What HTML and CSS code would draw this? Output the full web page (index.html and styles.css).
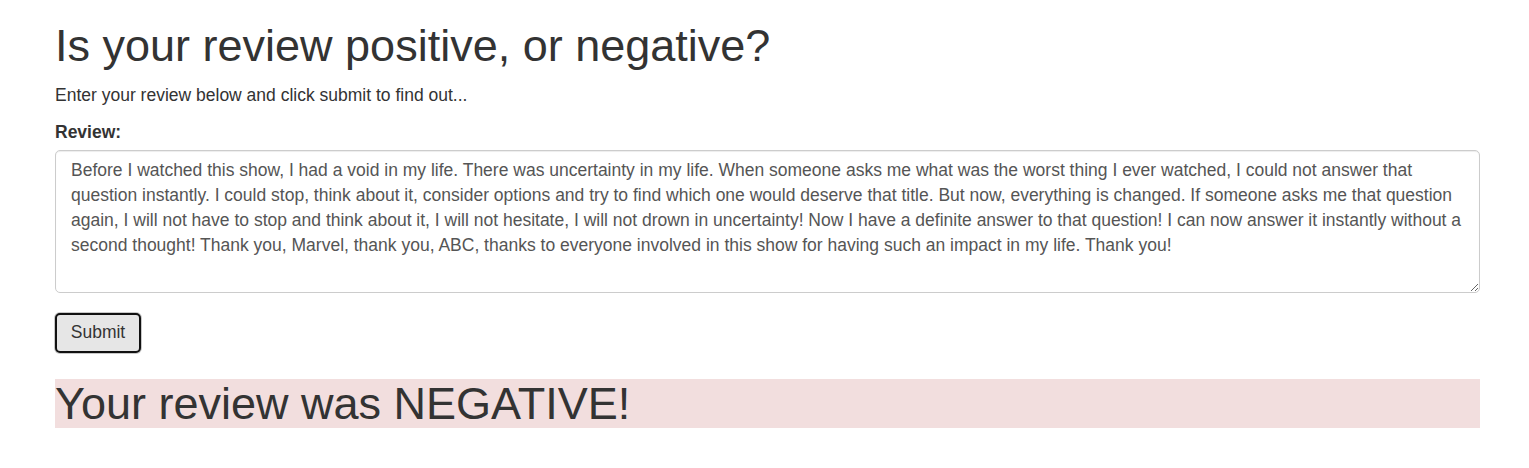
FILE: index.html
```html
<!DOCTYPE html>
<html>
<head>
<meta charset="utf-8">
<link rel="stylesheet" href="styles.css">
</head>
<body>
<div class="container">
  <h1 class="title">Is your review positive, or negative?</h1>
  <p class="lead-text">Enter your review below and click submit to find out...</p>
  <form class="review-form">
    <label class="field-label" for="review">Review:</label>
    <textarea id="review" class="review-box" rows="5">Before I watched this show, I had a void in my life. There was uncertainty in my life. When someone asks me what was the worst thing I ever watched, I could not answer that question instantly. I could stop, think about it, consider options and try to find which one would deserve that title. But now, everything is changed. If someone asks me that question again, I will not have to stop and think about it, I will not hesitate, I will not drown in uncertainty! Now I have a definite answer to that question! I can now answer it instantly without a second thought! Thank you, Marvel, thank you, ABC, thanks to everyone involved in this show for having such an impact in my life. Thank you!</textarea>
    <button type="button" class="submit-btn">Submit</button>
  </form>
  <h1 class="result negative">Your review was NEGATIVE!</h1>
</div>
</body>
</html>
```
FILE: styles.css
```css
html, body {
  margin: 0;
  padding: 0;
  background: #fff;
}
body {
  font-family: "Liberation Sans", Arial, sans-serif;
  font-size: 17.5px;
  line-height: 25px;
  color: #333;
}
.container {
  width: 1425px;
  margin: 0 0 0 55px;
  padding-top: 21px;
}
.title {
  font-size: 45px;
  font-weight: 500;
  line-height: 49.5px;
  margin: 0 0 12.5px 0;
}
.lead-text {
  margin: 0 0 11.5px 0;
}
.review-form {
  display: flex;
  flex-direction: column;
  align-items: flex-start;
}
.field-label {
  font-weight: bold;
  margin-bottom: 5px;
}
.review-box {
  box-sizing: border-box;
  width: 100%;
  height: 143px;
  padding: 7.5px 15px;
  border: 1px solid #ccc;
  border-radius: 5px;
  box-shadow: inset 0 1px 1px rgba(0,0,0,.075);
  font-family: "Liberation Sans", Arial, sans-serif;
  font-size: 17.5px;
  line-height: 25px;
  color: #555;
  margin: 0 0 20px 0;
  resize: both;
}
.submit-btn {
  box-sizing: border-box;
  width: 86px;
  height: 40px;
  background: #e6e6e6;
  border: 2px solid #111;
  border-radius: 5px;
  box-shadow: 0 0 0 1px #c8c8c8;
  font-family: "Liberation Sans", Arial, sans-serif;
  font-size: 17.5px;
  color: #333;
  padding: 0;
}
.result {
  font-size: 45px;
  font-weight: 500;
  line-height: 49.5px;
  margin: 26px 0 0 0;
}
.negative {
  background: #f2dede;
}
```
